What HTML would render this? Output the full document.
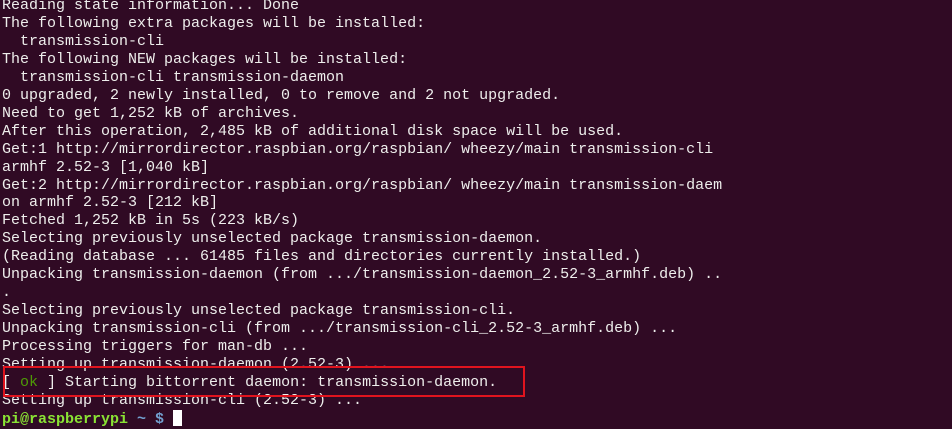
<!DOCTYPE html>
<html><head><style>
html,body{margin:0;padding:0;background:#300a24;width:952px;height:427px;overflow:hidden}
pre{margin:0;position:absolute;left:2px;top:-3px;font-family:"Liberation Mono",monospace;font-size:15px;line-height:17.95px;color:#eeeeec;white-space:pre}
.g{color:#8ae234;font-weight:bold}.b{color:#729fcf;font-weight:bold}.ok{color:#4e9a06}
.cur{display:inline-block;width:9px;height:16px;background:#fff;vertical-align:-3px}
.box{position:absolute;left:3px;top:366px;width:518px;height:27px;border:2px solid #e0141e}
</style></head><body>
<pre>Reading state information... Done
The following extra packages will be installed:
  transmission-cli
The following NEW packages will be installed:
  transmission-cli transmission-daemon
0 upgraded, 2 newly installed, 0 to remove and 2 not upgraded.
Need to get 1,252 kB of archives.
After this operation, 2,485 kB of additional disk space will be used.
Get:1 http://mirrordirector.raspbian.org/raspbian/ wheezy/main transmission-cli
armhf 2.52-3 [1,040 kB]
Get:2 http://mirrordirector.raspbian.org/raspbian/ wheezy/main transmission-daem
on armhf 2.52-3 [212 kB]
Fetched 1,252 kB in 5s (223 kB/s)
Selecting previously unselected package transmission-daemon.
(Reading database ... 61485 files and directories currently installed.)
Unpacking transmission-daemon (from .../transmission-daemon_2.52-3_armhf.deb) ..
.
Selecting previously unselected package transmission-cli.
Unpacking transmission-cli (from .../transmission-cli_2.52-3_armhf.deb) ...
Processing triggers for man-db ...
Setting up transmission-daemon (2.52-3) ...
[ <span class="ok">ok</span> ] Starting bittorrent daemon: transmission-daemon.
Setting up transmission-cli (2.52-3) ...
<span class="g">pi@raspberrypi</span> <span class="b">~ $</span> <span class="cur"></span></pre>
<div class="box"></div>
</body></html>
